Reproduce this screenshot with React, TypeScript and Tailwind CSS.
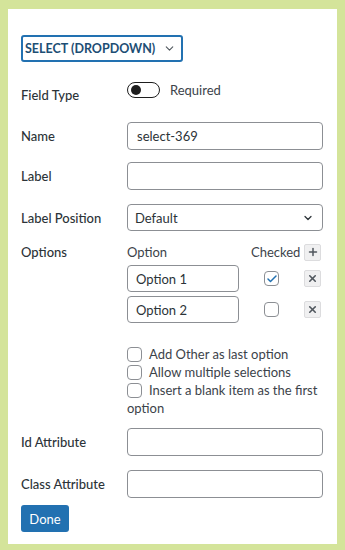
import { ChevronDown, Plus, X, Check } from 'lucide-react'

function TextInput({ value }: { value?: string }) {
  return (
    <div className="flex h-[28px] flex-1 items-center rounded-[4px] border border-[#8c8f94] bg-white px-[9px] text-[13px] leading-[18px] text-[#2c3338]">
      {value}
    </div>
  )
}

function Box({ checked }: { checked?: boolean }) {
  return (
    <div className="flex h-[15px] w-[15px] shrink-0 items-center justify-center rounded-[4px] border border-[#8c8f94] bg-white">
      {checked && <Check className="h-[12px] w-[12px] text-[#2271b1]" strokeWidth={3} />}
    </div>
  )
}

export default function App() {
  const labelCls = 'w-[106px] shrink-0 text-[13px] leading-[18px] font-medium text-[#2c3338]'

  return (
    <div
      className="h-[550px] overflow-hidden bg-[#d4e49a] px-[8px] pt-[9px]"
      style={{ fontFamily: 'Lato, "Noto Sans", sans-serif' }}
    >
      <div className="bg-white pl-[13px] pr-[14px] pt-[26px] pb-[12px]">
        {/* Field type dropdown */}
        <div className="flex h-[27px] w-[162px] items-center justify-between rounded-[3px] border-2 border-[#2271b1] pl-[2px] pr-[5px]">
          <span className="text-[12.5px] leading-[18px] font-bold text-[#1d4e74]">SELECT (DROPDOWN)</span>
          <ChevronDown className="h-[13px] w-[13px] text-[#50575e]" strokeWidth={2} />
        </div>

        {/* Field Type / Required */}
        <div className="mt-[19px] flex items-start">
          <div className={`${labelCls} pt-[5px]`}>Field Type</div>
          <div className="flex items-center gap-[10px]">
            <div className="flex h-[16px] w-[33px] items-center rounded-full border border-[#1e1e1e] px-[3px]">
              <div className="h-[10px] w-[10px] rounded-full bg-[#1e1e1e]" />
            </div>
            <span className="text-[13px] leading-[18px] text-[#3c434a]">Required</span>
          </div>
        </div>

        {/* Name */}
        <div className="mt-[18px] flex items-center">
          <div className={labelCls}>Name</div>
          <TextInput value="select-369" />
        </div>

        {/* Label */}
        <div className="mt-[12px] flex items-center">
          <div className={labelCls}>Label</div>
          <TextInput />
        </div>

        {/* Label Position */}
        <div className="mt-[14px] flex items-center">
          <div className={`${labelCls} w-[105px]`}>Label Position</div>
          <div className="flex h-[27px] flex-1 items-center justify-between rounded-[4px] border border-[#8c8f94] pl-[7px] pr-[8px] text-[13px] leading-[18px] text-[#2c3338]">
            <span>Default</span>
            <ChevronDown className="h-[12px] w-[12px] text-[#2c3338]" strokeWidth={2.5} />
          </div>
        </div>

        {/* Options */}
        <div className="mt-[12px] flex items-start">
          <div className={labelCls}>Options</div>
          <div className="flex-1">
            <div className="flex h-[18px] items-center text-[13px] leading-[18px] text-[#3c434a]">
              <span className="w-[124px]">Option</span>
              <span className="w-[53px]">Checked</span>
              <div className="flex h-[17px] w-[17px] items-center justify-center rounded-[2px] border border-[#dcdcde] bg-[#f0f0f1]">
                <Plus className="h-[12px] w-[12px] text-[#50575e]" strokeWidth={3} />
              </div>
            </div>
            {[
              { name: 'Option 1', checked: true },
              { name: 'Option 2', checked: false },
            ].map((o) => (
              <div key={o.name} className="mt-[4px] flex h-[27px] items-center">
                <div className="flex h-[27px] w-[112px] items-center rounded-[4px] border border-[#8c8f94] px-[8px] text-[13px] leading-[18px] text-[#2c3338]">
                  {o.name}
                </div>
                <div className="flex w-[65px] justify-center">
                  <Box checked={o.checked} />
                </div>
                <div className="flex h-[17px] w-[17px] items-center justify-center rounded-[2px] border border-[#dcdcde] bg-[#f0f0f1]">
                  <X className="h-[11px] w-[11px] text-[#50575e]" strokeWidth={3.5} />
                </div>
              </div>
            ))}

            <div className="mt-[22px] text-[13px] leading-[18px] text-[#3c434a]">
              <label className="flex h-[18px] items-center gap-[7px]">
                <Box /> Add Other as last option
              </label>
              <label className="flex h-[18px] items-center gap-[7px]">
                <Box /> Allow multiple selections
              </label>
              <div className="whitespace-nowrap">
                <span className="inline-flex h-[18px] items-center gap-[7px] align-top">
                  <Box /> Insert a blank item as the first
                </span>
                <br />
                option
              </div>
            </div>
          </div>
        </div>

        {/* Id Attribute */}
        <div className="mt-[11px] flex items-center">
          <div className={labelCls}>Id Attribute</div>
          <TextInput />
        </div>

        {/* Class Attribute */}
        <div className="mt-[14px] flex items-center">
          <div className={labelCls}>Class Attribute</div>
          <TextInput />
        </div>

        <button className="mt-[7px] flex h-[27px] w-[48px] items-center justify-center rounded-[3px] bg-[#2271b1] text-[13px] leading-[18px] text-white">
          Done
        </button>
      </div>
    </div>
  )
}
